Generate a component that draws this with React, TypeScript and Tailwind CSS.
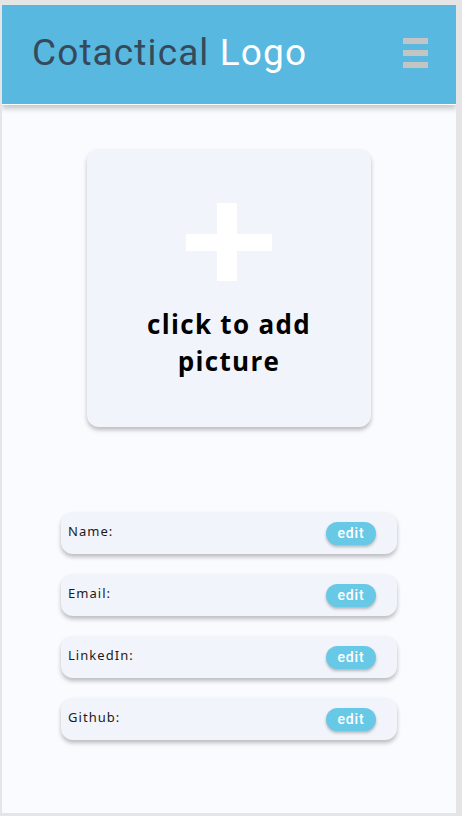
import React from 'react';

const fields = ['Name:', 'Email:', 'LinkedIn:', 'Github:'];

const FieldRow = ({ label }: { label: string }) => (
  <div className="flex h-[42px] w-[336px] items-center justify-between rounded-xl bg-[#f1f4fa] pl-[7px] pr-[21px] shadow-[0_3px_4px_rgba(0,0,0,0.25)]">
    <span className="-mt-[2px] text-[13px] tracking-[0.08em] text-[#1a1a1a]" style={{ fontFamily: '"Noto Sans", sans-serif' }}>
      {label}
    </span>
    <button className="h-[23px] w-[50px] rounded-full bg-[#68c9e6] text-[14px] font-medium tracking-[0.06em] text-white shadow-[0_2px_3px_rgba(0,0,0,0.25)]" style={{ fontFamily: 'Roboto, sans-serif' }}>
      edit
    </button>
  </div>
);

export default function App() {
  return (
    <div className="h-[816px] w-[462px] bg-[#e5e5e5] pt-[5px] pl-[2px]">
      <div className="flex h-[808px] w-[454px] flex-col overflow-hidden bg-[#fafbfe]">
        <header className="relative z-10 flex h-[100px] shrink-0 items-center justify-between border-b border-white bg-[#58b8e0] pl-[30px] pr-[28px] shadow-[0_4px_5px_rgba(0,0,0,0.2)]">
          <h1 className="-mt-1 text-[37px] font-normal tracking-[0.03em]" style={{ fontFamily: 'Roboto, sans-serif' }}>
            <span className="text-[#36495a]">Cotactical</span> <span className="text-white">Logo</span>
          </h1>
          <div className="-mt-1 flex flex-col gap-[6px]">
            <div className="h-[6px] w-[25px] bg-[#c4c4c4]" />
            <div className="h-[6px] w-[25px] bg-[#c4c4c4]" />
            <div className="h-[6px] w-[25px] bg-[#c4c4c4]" />
          </div>
        </header>

        <div className="flex flex-col items-center pt-[44px]">
          <button className="flex h-[278px] w-[284px] flex-col items-center rounded-xl bg-[#f1f4fa] pt-[54px] shadow-[0_3px_4px_rgba(0,0,0,0.25)]">
            <div className="relative h-[78px] w-[86px]">
              <div className="absolute left-[31px] top-0 h-[78px] w-[20px] bg-white" />
              <div className="absolute left-0 top-[31px] h-[17px] w-[86px] bg-white" />
            </div>
            <span className="mt-[25px] text-[26px] font-bold leading-[37px] tracking-[0.05em] text-black" style={{ fontFamily: '"Open Sans", sans-serif' }}>
              click to add
              <br />
              picture
            </span>
          </button>

          <div className="mt-[85px] flex flex-col gap-[20px]">
            {fields.map((f) => (
              <FieldRow key={f} label={f} />
            ))}
          </div>
        </div>
      </div>
    </div>
  );
}
